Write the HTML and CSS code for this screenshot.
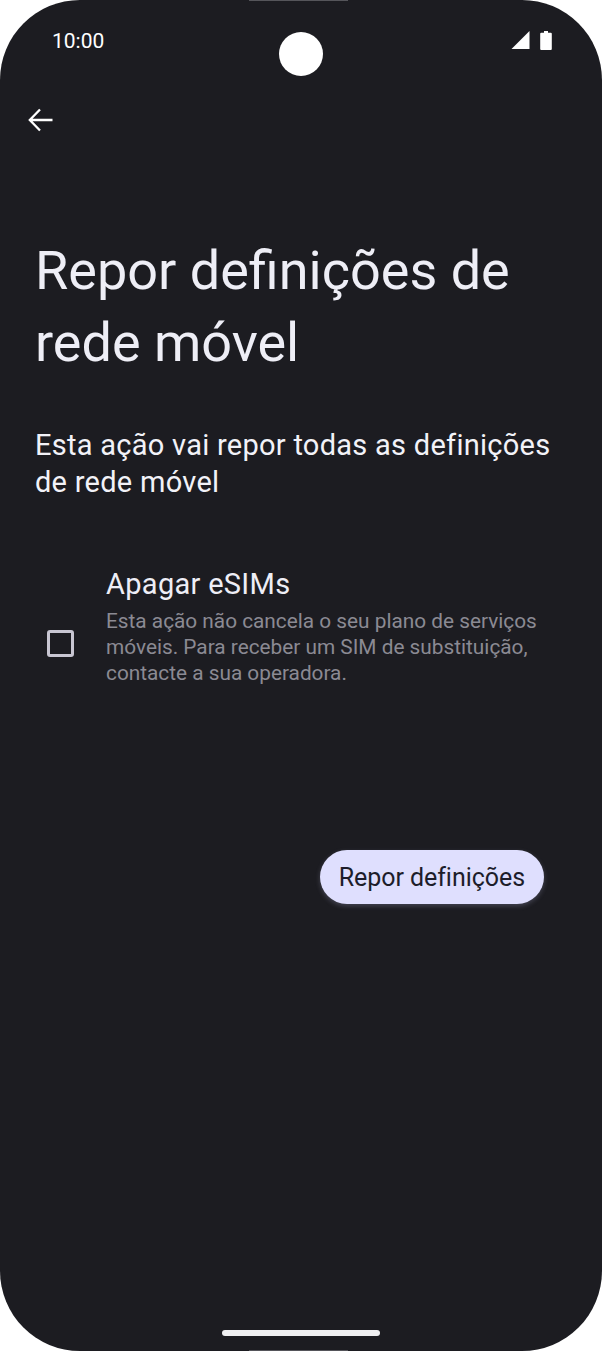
FILE: index.html
```html
<!DOCTYPE html>
<html lang="pt">
<head>
    <meta charset="UTF-8">
    <meta name="viewport" content="width=device-width, initial-scale=1.0">
    <title>Repor definições de rede móvel</title>
    <link rel="stylesheet" href="styles.css">
</head>
<body>
    <div id="phone">
        <div class="edge edge-top"></div>
        <div class="camera"></div>

        <div class="status-bar">
            <span class="clock">10:00</span>
            <div class="status-icons">
                <svg width="19" height="18" viewBox="0 0 19 18"><path d="M18.500 0V18H0.500Z" fill="#fff"/></svg>
                <svg width="12" height="19" viewBox="0 0 12 19"><path d="M4 0h4v1.800h2.800a1 1 0 0 1 1 1V18a1 1 0 0 1-1 1H1.200a1 1 0 0 1-1-1V2.800a1 1 0 0 1 1-1H4Z" fill="#fff"/></svg>
            </div>
        </div>

        <div class="toolbar">
            <svg width="26" height="24" viewBox="0 0 26 24"><path d="M12 1.500 1.800 12 12 22.500M2 12H24.500" fill="none" stroke="#fff" stroke-width="2.300"/></svg>
        </div>

        <h1 class="title">Repor definições de rede móvel</h1>
        <p class="desc">Esta ação vai repor todas as definições de rede móvel</p>

        <div class="option">
            <div class="check-col"><div class="checkbox"></div></div>
            <div class="option-text">
                <div class="option-title">Apagar eSIMs</div>
                <div class="option-sub">Esta ação não cancela o seu plano de serviços móveis. Para receber um SIM de substituição, contacte a sua operadora.</div>
            </div>
        </div>

        <div class="actions">
            <button class="reset-btn">Repor definições</button>
        </div>

        <div class="home-bar"></div>
        <div class="edge edge-bottom"></div>
    </div>
</body>
</html>
```

FILE: styles.css
```css
html, body {
    margin: 0;
    background-color: #fff;
}

#phone {
    position: relative;
    width: 602px;
    height: 1351px;
    overflow: hidden;
    background-color: #1c1c21;
    border-radius: 80px;
    font-family: 'Roboto', sans-serif;
    color: #eeeef6;
}

.edge {
    position: absolute;
    left: 249px;
    width: 99px;
    height: 1px;
    background-color: #55555a;
}

.edge-top { top: 0; }
.edge-bottom { bottom: 0; }

.camera {
    position: absolute;
    left: 279px;
    top: 32px;
    width: 44px;
    height: 44px;
    border-radius: 50%;
    background-color: #fff;
}

.status-bar {
    display: flex;
    justify-content: space-between;
    align-items: center;
    height: 30px;
    padding: 25px 50px 0 52px;
}

.clock {
    position: relative;
    top: 1px;
    font-size: 21px;
    color: #fff;
}

.status-icons {
    display: flex;
    align-items: center;
    gap: 10px;
}

.toolbar {
    display: flex;
    align-items: center;
    height: 24px;
    padding: 53px 0 0 28px;
}

.title {
    margin: 103px 0 0;
    padding: 0 35px;
    font-size: 54px;
    line-height: 72px;
    font-weight: 400;
}

.desc {
    margin: 48px 0 0;
    padding: 0 35px;
    font-size: 29px;
    line-height: 37px;
    letter-spacing: 0.27px;
    color: #f2f2f8;
}

.option {
    display: flex;
    align-items: flex-start;
    margin-top: 65px;
    padding-right: 50px;
}

.check-col {
    flex-shrink: 0;
    width: 59px;
    padding: 64px 0 0 47px;
}

.checkbox {
    width: 21px;
    height: 21px;
    border: 3px solid #c8c6d2;
    border-radius: 3px;
}

.option-title {
    font-size: 29px;
    line-height: 36px;
    letter-spacing: 0.3px;
    color: #eeeef6;
}

.option-sub {
    margin-top: 6px;
    font-size: 20.800px;
    line-height: 26px;
    color: #8b8a93;
}

.actions {
    display: flex;
    justify-content: flex-end;
    margin-top: 164px;
    padding-right: 58px;
}

.reset-btn {
    height: 54px;
    padding: 0 19px;
    border: none;
    border-radius: 27px;
    background-color: #dfdffe;
    color: #1d1d2a;
    font-family: inherit;
    font-size: 25px;
    letter-spacing: -0.05px;
    box-shadow: 0 2px 5px rgba(190, 190, 230, 0.25);
}

.home-bar {
    position: absolute;
    left: 222px;
    bottom: 15px;
    width: 158px;
    height: 6px;
    border-radius: 3px;
    background-color: #efeff1;
}
```
